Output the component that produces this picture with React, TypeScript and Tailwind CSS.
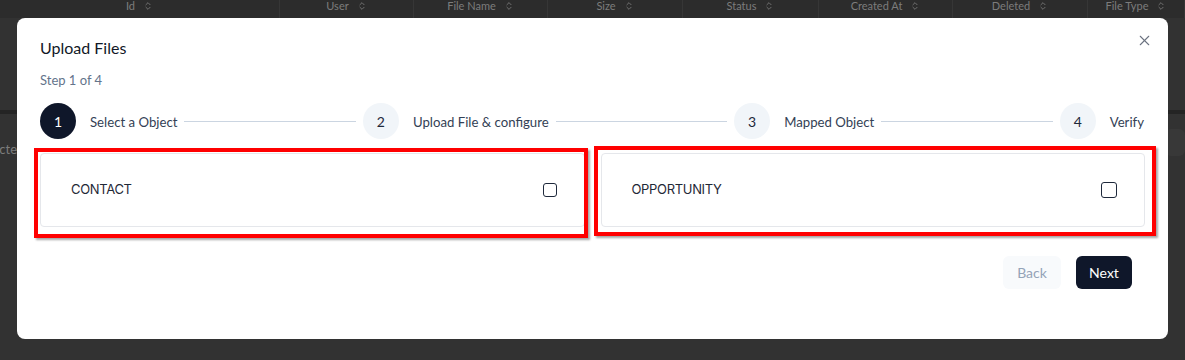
import { Fragment } from "react";
import { X, ChevronsUpDown } from "lucide-react";

const columns = [
  { label: "Id", w: "w-[280px]" },
  { label: "User", w: "w-[134px]" },
  { label: "File Name", w: "w-[134px]" },
  { label: "Size", w: "w-[135px]" },
  { label: "Status", w: "w-[136px]" },
  { label: "Created At", w: "w-[134px]" },
  { label: "Deleted", w: "w-[135px]" },
  { label: "File Type", w: "flex-1" },
];

const steps = ["Select a Object", "Upload File & configure", "Mapped Object", "Verify"];

function ObjectCard({ label, box, frame }: { label: string; box: string; frame: string }) {
  return (
    <div className="relative h-[74px] rounded border border-[#e5e7eb] bg-white flex items-center justify-between pl-[30px] pr-[27px]">
      <span className="text-[13px] text-[#1f2937] tracking-tight" style={{ fontFamily: "Inter, sans-serif" }}>
        {label}
      </span>
      <span className={`${box} rounded-[3px] border-[1.5px] border-[#1e293b] bg-white`} />
      <div className={`pointer-events-none absolute border-4 border-[#ff0000] shadow-[2px_2px_2px_rgba(0,0,0,0.35)] ${frame}`} />
    </div>
  );
}

export default function App() {
  return (
    <div
      className="relative w-full h-[360px] overflow-hidden bg-[#323232]"
      style={{ fontFamily: "Lato, 'Noto Sans', sans-serif" }}
    >
      {/* table behind the modal */}
      <div className="flex h-[18px] bg-[#2c2c2c] text-[11px] text-[#7c7c7c]">
        {columns.map((c) => (
          <div key={c.label} className={`${c.w} flex items-start justify-center gap-2 border-r border-[#363636] -mt-[2px]`}>
            <span>{c.label}</span>
            <ChevronsUpDown size={10} className="mt-[3px]" />
          </div>
        ))}
      </div>
      <div className="mt-[92px] h-[4px] bg-[#242424]" />
      <div className="flex items-start justify-between mt-[26px]">
        <div className="w-[17px] overflow-hidden flex justify-end text-[13px] text-[#7c7c7c]">
          <span className="whitespace-nowrap">Selecte</span>
        </div>
        <div className="w-[20px] h-[27px] rounded-md bg-[#383838] -mt-[11px]" />
      </div>

      {/* modal */}
      <div className="absolute left-[17px] top-[18px] w-[1151px] h-[321px] bg-white rounded-lg px-[23px] pt-[20px]">
        <button className="absolute right-[15px] top-[14px] text-[#6b7280]">
          <X size={17} strokeWidth={1.5} />
        </button>
        <h2 className="text-[16px] leading-[20px] text-[#111827]">Upload Files</h2>
        <p className="mt-[12px] text-[13px] leading-[20px] text-[#64748b]">Step 1 of 4</p>

        <div className="mt-[13px] flex items-center pr-[1px]">
          {steps.map((s, i) => (
            <Fragment key={s}>
              <div
                className={
                  i === 0
                    ? "w-9 h-9 shrink-0 rounded-full bg-[#0f172a] text-white flex items-center justify-center text-[14px]"
                    : "w-9 h-9 shrink-0 rounded-full bg-[#f1f5f9] text-[#1e293b] flex items-center justify-center text-[14px]"
                }
              >
                {i + 1}
              </div>
              <span className="ml-[14px] text-[13.2px] leading-[20px] pt-[1px] text-[#334155] whitespace-nowrap">{s}</span>
              {i < steps.length - 1 && <div className="flex-1 h-px bg-[#cbd5e1] mx-[7px]" />}
            </Fragment>
          ))}
        </div>

        <div className="mt-[14px] grid grid-cols-2 gap-4">
          <ObjectCard label="CONTACT" box="w-[14px] h-[14px]" frame="-left-[7px] -right-[4px] -top-[6px] -bottom-[12px]" />
          <ObjectCard label="OPPORTUNITY" box="w-[16px] h-[16px]" frame="-left-[8px] -right-[12px] -top-[8px] -bottom-[10px]" />
        </div>

        <div className="mt-[29px] flex justify-end gap-[15px] pr-[13px]">
          <button className="h-[33px] w-[58px] rounded-md bg-[#f8fafc] text-[14px] text-[#94a3b8]">Back</button>
          <button className="h-[33px] w-[56px] rounded-md bg-[#0f172a] text-[14px] text-white">Next</button>
        </div>
      </div>
    </div>
  );
}
